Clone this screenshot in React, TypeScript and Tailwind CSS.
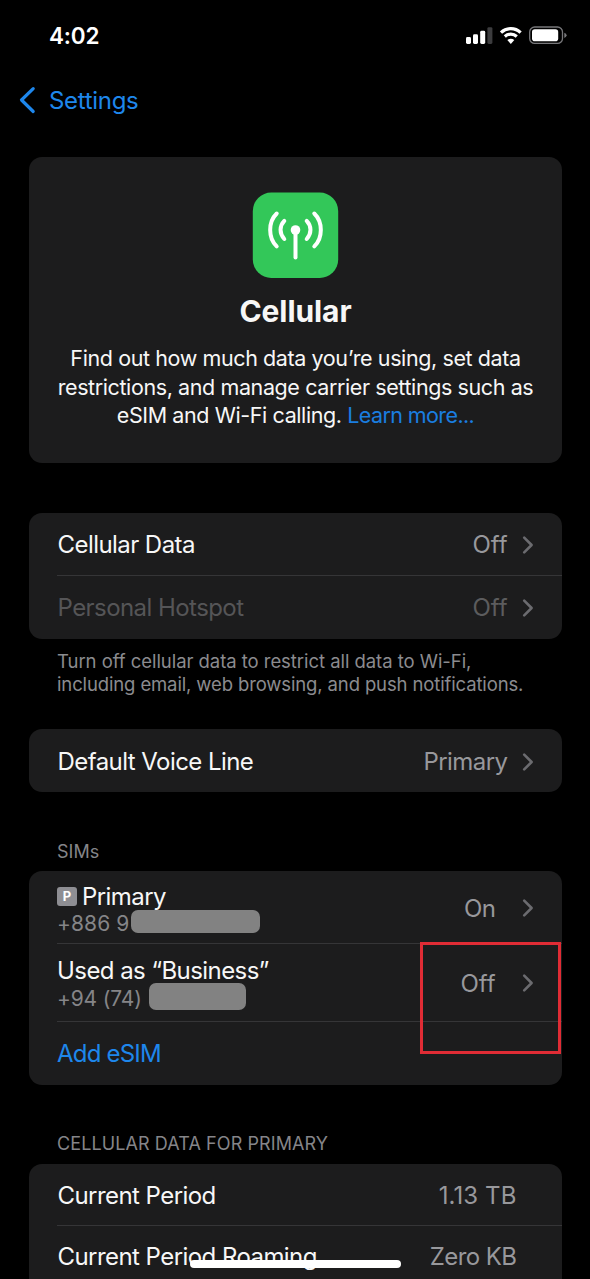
import type { ReactNode } from 'react';

function Chevron() {
  return (
    <svg className="h-[20px] w-[12px] shrink-0" viewBox="0 0 12 20" fill="none" stroke="#6b6b6f" strokeWidth="2.6" strokeLinecap="round" strokeLinejoin="round">
      <path d="M2.2 2.6 L9.6 10 L2.2 17.4" />
    </svg>
  );
}

function Card({ className, children }: { className: string; children: ReactNode }) {
  return <section className={`rounded-[13px] bg-[#1c1c1d] ${className}`}>{children}</section>;
}

function Divider() {
  return <div className="ml-7 h-px shrink-0 bg-[#353537]" />;
}

type RowProps = {
  label: string;
  value: string;
  dim?: boolean;
  chevron?: boolean;
  valueClass?: string;
  className: string;
};

function Row({ label, value, dim, chevron = true, valueClass = '', className }: RowProps) {
  return (
    <div className={`flex items-center pl-[28.5px] ${className}`}>
      <span className={`flex-1 whitespace-nowrap ${dim ? 'text-[#555557]' : 'text-[#f7f7f7]'}`}>{label}</span>
      <span className={`whitespace-nowrap ${dim ? 'text-[#5c5c5e]' : 'text-[#98989c]'} ${chevron ? 'mr-[14.5px]' : 'mr-[45.5px]'} ${valueClass}`}>{value}</span>
      {chevron && <span className="mr-[28px] flex"><Chevron /></span>}
    </div>
  );
}

function StatusIcons() {
  return (
    <svg className="h-[20px] w-[102px]" viewBox="465 25 102 20" fill="none">
      <rect x="466" y="37" width="5" height="7" rx="1.4" fill="#fff" />
      <rect x="473" y="34.2" width="5" height="9.8" rx="1.4" fill="#fff" />
      <rect x="480.2" y="30.8" width="5" height="13.2" rx="1.4" fill="#fff" />
      <rect x="487.4" y="27.2" width="5" height="16.8" rx="1.4" fill="#3c3c3e" />
      <path d="M501 32.6 A14 14 0 0 1 520.6 32.6" stroke="#fff" strokeWidth="3.2" />
      <path d="M504.8 36.5 A8.8 8.8 0 0 1 516.8 36.5" stroke="#fff" strokeWidth="3.1" />
      <path d="M507.3 40.1 Q510.8 37.2 514.3 40.1 L510.8 43.9 Z" fill="#fff" />
      <rect x="529.7" y="27" width="32.8" height="16.4" rx="5" stroke="#77777a" strokeWidth="1.3" />
      <rect x="532" y="29.2" width="26.2" height="12" rx="2.8" fill="#fff" />
      <path d="M564.3 32.7 Q566.6 33.6 566.6 35.3 Q566.6 37 564.3 37.9 Z" fill="#77777a" />
    </svg>
  );
}

function CellularIcon() {
  return (
    <svg className="h-[86px] w-[87px]" viewBox="252 192 87 86" fill="none" stroke="#fff" strokeLinecap="round">
      <rect x="252.8" y="192.6" width="85.4" height="85.4" rx="18.5" fill="#33c759" stroke="none" />
      <path d="M276.7 213.5 C268 222 268 238 276.7 246.4" strokeWidth="4" />
      <path d="M314.3 213.5 C323 222 323 238 314.3 246.4" strokeWidth="4" />
      <path d="M284.3 220.9 C279.3 226 279.3 233.6 284.3 239" strokeWidth="4" />
      <path d="M306.7 220.9 C311.7 226 311.7 233.6 306.7 239" strokeWidth="4" />
      <circle cx="295.5" cy="230" r="4.8" fill="#fff" stroke="none" />
      <path d="M295.5 231 V257.4" strokeWidth="4" />
    </svg>
  );
}

export default function App() {
  return (
    <div className="relative flex h-[1279px] w-[590px] flex-col overflow-hidden bg-black pr-[28px] pl-[29px] font-['Inter',sans-serif] text-[24px] leading-[30px] tracking-[-0.56px] text-[#f7f7f7]">
      <header className="-mr-[28px] flex h-[70px] shrink-0 items-center pr-[23px] pl-[20px]">
        <span className="flex-1 pt-[2px] text-[22.5px] font-semibold tracking-[-0.15px] text-white">4:02</span>
        <StatusIcons />
      </header>
      <nav className="-ml-[11px] flex h-[60px] shrink-0 items-center text-[#1e87ec]">
        <svg className="h-[30px] w-[18px]" viewBox="0 0 18 30" fill="none" stroke="currentColor" strokeWidth="3.2" strokeLinecap="round" strokeLinejoin="round">
          <path d="M15.2 3.7 L3.5 15 L15.2 26.5" />
        </svg>
        <span className="ml-[13px] pt-[1px] tracking-[-0.3px]">Settings</span>
      </nav>

      <Card className="mt-[27px] flex h-[306px] shrink-0 flex-col items-center pt-[35px]">
        <CellularIcon />
        <h1 className="mt-[15px] text-[30px] leading-[36px] font-bold tracking-[-0.08px]">Cellular</h1>
        <p className="mt-[15px] text-center text-[21.5px] leading-[28.5px] tracking-[-0.4px] whitespace-nowrap">
          Find out how much data you’re using, set data<br />
          restrictions, and manage carrier settings such as<br />
          eSIM and Wi-Fi calling. <span className="tracking-[-0.6px] text-[#1a7ee0]">Learn more...</span>
        </p>
      </Card>

      <Card className="mt-[50px] flex h-[126px] shrink-0 flex-col">
        <Row label="Cellular Data" value="Off" valueClass="tracking-[-0.1px]" className="h-[62px] pt-[2px]" />
        <Divider />
        <Row label="Personal Hotspot" value="Off" valueClass="tracking-[-0.1px]" dim className="h-[63px]" />
      </Card>
      <p className="mt-[11px] h-[46px] shrink-0 pl-7 text-[18.5px] leading-[23px] whitespace-nowrap text-[#8b8b8f]">
        <span className="tracking-[-0.05px]">Turn off cellular data to restrict all data to Wi-Fi,</span><br />
        <span className="tracking-[-0.13px]">including email, web browsing, and push notifications.</span>
      </p>

      <Card className="mt-[33px] h-[63px] shrink-0">
        <Row label="Default Voice Line" value="Primary" className="h-[63px] pt-[2px]" />
      </Card>

      <h2 className="mt-[48px] h-[24px] shrink-0 pl-7 text-[18px] leading-[24px] tracking-[0px] text-[#858589]">SIMs</h2>
      <Card className="mt-[7px] flex h-[214px] shrink-0 flex-col">
        <div className="flex h-[72px] items-center pt-[2px] pl-7">
          <div className="flex-1 pt-[2px]">
            <div className="flex h-[27px] items-center">
              <span className="mr-[5px] flex h-[19px] w-[20px] items-center justify-center rounded-[3px] bg-[#8e8e93] text-[13px] leading-none font-bold tracking-normal text-white">P</span>
              <span className="pt-px">Primary</span>
            </div>
            <div className="flex h-[26px] items-center text-[21px] tracking-[0.1px] text-[#858588]">
              <span className="w-[73px] pt-[2px] whitespace-nowrap">+886 9</span>
              <span className="mb-[2px] ml-[1px] h-[23px] w-[129px] rounded-[7px] bg-[#828282]" />
            </div>
          </div>
          <span className="mr-[26.5px] pt-px text-[#98989c]">On</span>
          <span className="mr-[28px] flex"><Chevron /></span>
        </div>
        <Divider />
        <div className="flex h-[77px] items-center pl-7">
          <div className="flex-1 pt-[3px]">
            <div className="h-[27px] leading-[27px]">Used as “Business”</div>
            <div className="flex h-[27px] items-center text-[21px] tracking-[-0.15px] text-[#858588]">
              <span className="w-[86px] pt-[2px] whitespace-nowrap">+94 (74)</span>
              <span className="mb-[2px] ml-[6px] h-[27px] w-[97px] rounded-[7px] bg-[#828282]" />
            </div>
          </div>
          <span className="mr-[26.5px] pt-[2px] tracking-[-0.1px] text-[#98989c]">Off</span>
          <span className="mr-[28px] flex"><Chevron /></span>
        </div>
        <Divider />
        <div className="flex h-[63px] items-center pt-px pl-7 tracking-[-0.8px] text-[#1e87ec]">Add eSIM</div>
      </Card>

      <h2 className="mt-[47px] h-[24px] shrink-0 pl-7 text-[18px] leading-[24px] tracking-[0.09px] whitespace-nowrap text-[#858589]">CELLULAR DATA FOR PRIMARY</h2>
      <Card className="mt-[8px] flex h-[140px] shrink-0 flex-col">
        <Row label="Current Period" value="1.13 TB" valueClass="tracking-[0.1px]" chevron={false} className="h-[61px] pt-[2px]" />
        <Divider />
        <Row label="Current Period Roaming" value="Zero KB" chevron={false} className="h-[62px]" />
      </Card>

      <div className="absolute top-[942px] left-[420px] h-[112px] w-[141px] border-[3px] border-[#e02c35]" />
      <div className="absolute top-[1260px] left-[190px] h-[8px] w-[211px] rounded-full bg-white" />
    </div>
  );
}
